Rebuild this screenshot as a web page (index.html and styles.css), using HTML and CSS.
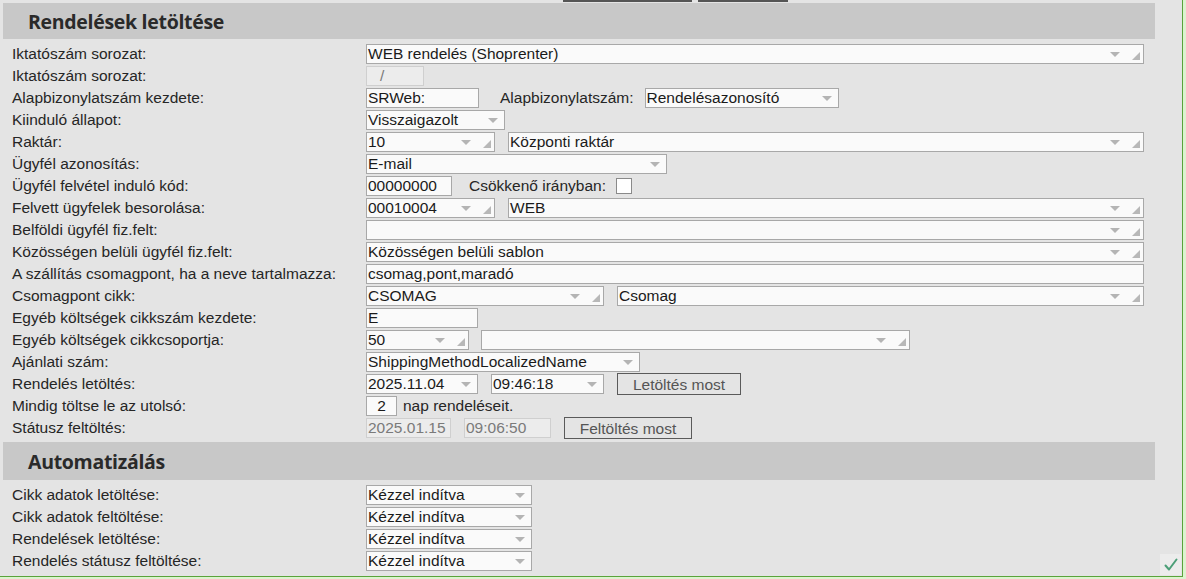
FILE: index.html
```html
<!DOCTYPE html>
<html lang="hu">
<head>
<meta charset="utf-8">
<title>Rendelések letöltése</title>
<link rel="stylesheet" href="styles.css">
</head>
<body>
<div class="page">
  <div class="topstrip"><span class="tb tb1"></span><span class="tb tb2"></span></div>
  <div class="sect">Rendelések letöltése</div>
  <div class="rows">
    <div class="row"><div class="lbl">Iktatószám sorozat:</div><div class="fld w-full sel combo">WEB rendelés (Shoprenter)</div></div>
    <div class="row"><div class="lbl">Iktatószám sorozat:</div><div class="fld dis w-58 ctr-slash">/</div></div>
    <div class="row"><div class="lbl">Alapbizonylatszám kezdete:</div><div class="fld w-113">SRWeb:</div><span class="txt ml-21">Alapbizonylatszám:</span><div class="fld sel w-194 ml-auto1">Rendelésazonosító</div></div>
    <div class="row"><div class="lbl">Kiinduló állapot:</div><div class="fld sel w-139">Visszaigazolt</div></div>
    <div class="row"><div class="lbl">Raktár:</div><div class="fld sel combo w-129">10</div><div class="fld sel combo w-636 ml-13">Központi raktár</div></div>
    <div class="row"><div class="lbl">Ügyfél azonosítás:</div><div class="fld sel w-301">E-mail</div></div>
    <div class="row"><div class="lbl">Ügyfél felvétel induló kód:</div><div class="fld w-86">00000000</div><span class="txt ml-17">Csökkenő irányban:</span><span class="chk"></span></div>
    <div class="row"><div class="lbl">Felvett ügyfelek besorolása:</div><div class="fld sel combo w-129">00010004</div><div class="fld sel combo w-636 ml-13">WEB</div></div>
    <div class="row"><div class="lbl">Belföldi ügyfél fiz.felt:</div><div class="fld sel combo w-full"></div></div>
    <div class="row"><div class="lbl">Közösségen belüli ügyfél fiz.felt:</div><div class="fld sel combo w-full">Közösségen belüli sablon</div></div>
    <div class="row"><div class="lbl">A szállítás csomagpont, ha a neve tartalmazza:</div><div class="fld w-full">csomag,pont,maradó</div></div>
    <div class="row"><div class="lbl">Csomagpont cikk:</div><div class="fld sel combo w-238">CSOMAG</div><div class="fld sel combo w-527 ml-13">Csomag</div></div>
    <div class="row"><div class="lbl">Egyéb költségek cikkszám kezdete:</div><div class="fld w-112">E</div></div>
    <div class="row"><div class="lbl">Egyéb költségek cikkcsoportja:</div><div class="fld sel combo w-103">50</div><div class="fld sel combo w-429 ml-12"></div></div>
    <div class="row"><div class="lbl">Ajánlati szám:</div><div class="fld sel w-274">ShippingMethodLocalizedName</div></div>
    <div class="row"><div class="lbl">Rendelés letöltés:</div><div class="fld sel w-112">2025.11.04</div><div class="fld sel w-113 ml-13">09:46:18</div><button class="btn w-124 ml-13">Letöltés most</button></div>
    <div class="row"><div class="lbl">Mindig töltse le az utolsó:</div><div class="fld w-31 ctr">2</div><span class="txt ml-6">nap rendeléseit.</span></div>
    <div class="row"><div class="lbl">Státusz feltöltés:</div><div class="fld dis w-85">2025.01.15</div><div class="fld dis w-87 ml-13">09:06:50</div><button class="btn w-128 ml-13">Feltöltés most</button></div>
  </div>
  <div class="sect sect2">Automatizálás</div>
  <div class="rows">
    <div class="row"><div class="lbl">Cikk adatok letöltése:</div><div class="fld sel w-166">Kézzel indítva</div></div>
    <div class="row"><div class="lbl">Cikk adatok feltöltése:</div><div class="fld sel w-166">Kézzel indítva</div></div>
    <div class="row"><div class="lbl">Rendelések letöltése:</div><div class="fld sel w-166">Kézzel indítva</div></div>
    <div class="row"><div class="lbl">Rendelés státusz feltöltése:</div><div class="fld sel w-166">Kézzel indítva</div></div>
  </div>
  <div class="ok"><svg width="14" height="13" viewBox="0 0 14 13"><polyline points="1.5,7.5 5,11.5 12.5,1.5" fill="none" stroke="#4c9f78" stroke-width="2" stroke-linecap="round" stroke-linejoin="round"/></svg></div>
</div>
</body>
</html>
```

FILE: styles.css
```css
html, body {
  margin: 0;
  padding: 0;
  background: #dcf3cf;
}
body {
  width: 1186px;
  height: 579px;
  overflow: hidden;
  font-family: "Liberation Sans", Arial, sans-serif;
  font-size: 15.5px;
  color: #262626;
}
.page {
  position: relative;
  width: 1183px;
  height: 577px;
  box-sizing: border-box;
  background: #e4e4e4;
  border-right: 1px solid #5aa33a;
  border-bottom: 1px solid #5aa33a;
}
.topstrip {
  height: 3px;
  display: flex;
  align-items: flex-start;
  padding-left: 563px;
  gap: 6px;
}
.tb {
  display: block;
  height: 2px;
  background: #555;
}
.tb1 { width: 129px; }
.tb2 { width: 90px; }
.sect {
  margin-left: 3px;
  width: 1152px;
  height: 36px;
  background: #c8c8c8;
  box-sizing: border-box;
  padding-left: 25px;
  line-height: 37px;
  font-family: "Open Sans", "Noto Sans", sans-serif;
  font-weight: 700;
  font-size: 19.5px;
  color: #2a2a2a;
  letter-spacing: -0.3px;
}
.sect2 {
  margin-top: 3px;
  height: 38px;
  line-height: 40px;
}
.rows {
  margin-top: 4px;
  padding-left: 12px;
}
.row {
  display: flex;
  align-items: center;
  height: 22px;
  white-space: nowrap;
}
.lbl {
  width: 354px;
  flex: none;
}
.txt { flex: none; }
.fld {
  position: relative;
  flex: none;
  height: 20px;
  box-sizing: border-box;
  border: 1px solid #a8a8a8;
  background: #fafafa;
  padding-left: 1px;
  line-height: 18px;
  color: #1a1a1a;
  overflow: hidden;
}
.fld.dis {
  background: #ececec;
  border-color: #cfcfcf;
  color: #7a7a7a;
}
.ctr { text-align: center; padding-left: 0; }
.ctr-slash { padding-left: 13px; }
.sel::after {
  content: "";
  position: absolute;
  right: 6px;
  top: 7px;
  border-left: 5px solid transparent;
  border-right: 5px solid transparent;
  border-top: 5px solid #b4b4b4;
}
.combo::after { right: 23px; }
.combo::before {
  content: "";
  position: absolute;
  right: 3px;
  bottom: 3px;
  width: 0;
  height: 0;
  border-left: 8px solid transparent;
  border-bottom: 8px solid #b8b8b8;
}
.chk {
  flex: none;
  width: 16px;
  height: 16px;
  box-sizing: border-box;
  border: 1px solid #8a8a8a;
  background: #fff;
  margin-left: 10px;
}
.btn {
  flex: none;
  height: 22px;
  box-sizing: border-box;
  border: 1px solid #5a5a5a;
  background: #e4e4e4;
  color: #555;
  font-family: "Liberation Sans", Arial, sans-serif;
  font-size: 15.5px;
  padding: 0;
  line-height: 19px;
}
.ml-6 { margin-left: 6px; }
.ml-12 { margin-left: 12px; }
.ml-13 { margin-left: 13px; }
.ml-17 { margin-left: 17px; }
.ml-21 { margin-left: 21px; }
.ml-auto1 { margin-left: 11px; }
.w-full { width: 778px; }
.w-31 { width: 31px; }
.w-58 { width: 58px; }
.w-85 { width: 85px; }
.w-86 { width: 86px; }
.w-87 { width: 87px; }
.w-103 { width: 103px; }
.w-112 { width: 112px; }
.w-113 { width: 113px; }
.w-124 { width: 124px; }
.w-128 { width: 128px; }
.w-129 { width: 129px; }
.w-139 { width: 139px; }
.w-166 { width: 166px; }
.w-194 { width: 194px; }
.w-238 { width: 238px; }
.w-274 { width: 274px; }
.w-301 { width: 301px; }
.w-429 { width: 429px; }
.w-527 { width: 527px; }
.w-636 { width: 636px; }
.ok {
  position: absolute;
  right: 1px;
  bottom: 1px;
  width: 21px;
  height: 21px;
  background: #ececec;
  display: flex;
  align-items: center;
  justify-content: center;
}
```
